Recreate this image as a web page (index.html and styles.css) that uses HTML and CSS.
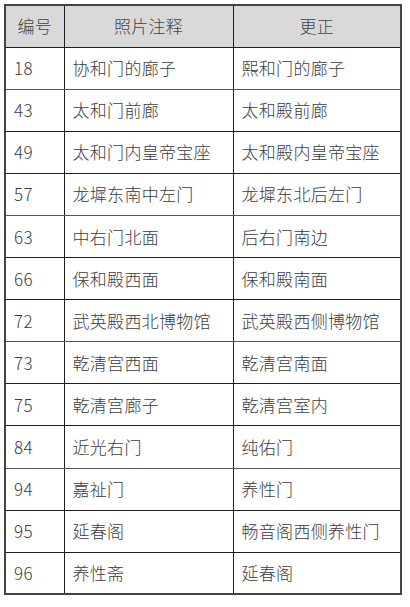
FILE: index.html
```html
<!DOCTYPE html>
<html lang="zh">
<head>
<meta charset="utf-8">
<link rel="stylesheet" href="styles.css">
</head>
<body>
<table class="fix-table">
  <colgroup>
    <col class="col-no">
    <col class="col-note">
    <col class="col-fix">
  </colgroup>
  <thead>
    <tr><th>编号</th><th>照片注释</th><th>更正</th></tr>
  </thead>
  <tbody>
    <tr><td>18</td><td>协和门的廊子</td><td>熙和门的廊子</td></tr>
    <tr><td>43</td><td>太和门前廊</td><td>太和殿前廊</td></tr>
    <tr><td>49</td><td>太和门内皇帝宝座</td><td>太和殿内皇帝宝座</td></tr>
    <tr><td>57</td><td>龙墀东南中左门</td><td>龙墀东北后左门</td></tr>
    <tr><td>63</td><td>中右门北面</td><td>后右门南边</td></tr>
    <tr><td>66</td><td>保和殿西面</td><td>保和殿南面</td></tr>
    <tr><td>72</td><td>武英殿西北博物馆</td><td>武英殿西侧博物馆</td></tr>
    <tr><td>73</td><td>乾清宫西面</td><td>乾清宫南面</td></tr>
    <tr><td>75</td><td>乾清宫廊子</td><td>乾清宫室内</td></tr>
    <tr><td>84</td><td>近光右门</td><td>纯佑门</td></tr>
    <tr><td>94</td><td>嘉祉门</td><td>养性门</td></tr>
    <tr><td>95</td><td>延春阁</td><td>畅音阁西侧养性门</td></tr>
    <tr><td>96</td><td>养性斋</td><td>延春阁</td></tr>
  </tbody>
</table>
</body>
</html>
```
FILE: styles.css
```css
html, body {
  margin: 0;
  padding: 0;
  background: #ffffff;
}
body {
  padding: 4px 0 0 4px;
  font-family: "Noto Sans CJK SC", "Liberation Sans", sans-serif;
  color: #3c3c3c;
}
.fix-table {
  border-collapse: collapse;
  table-layout: fixed;
  width: 396px;
  border: 2px solid #444444;
  font-size: 17px;
  letter-spacing: 0.3px;
}
.col-no { width: 59px; }
.col-note { width: 169px; }
.col-fix { width: 168px; }
.fix-table tr {
  height: 42.1px;
}
.fix-table th,
.fix-table td {
  border: 1px solid #1e1e1e;
  padding: 0 8px;
  text-align: left;
  vertical-align: middle;
  font-weight: 300;
  white-space: nowrap;
  line-height: 20px;
}
.fix-table th {
  background: #d9d9d9;
  text-align: center;
  color: #444444;
}
.fix-table tbody tr:nth-child(3n+1) td {
  border-bottom-color: #555555;
}
```
